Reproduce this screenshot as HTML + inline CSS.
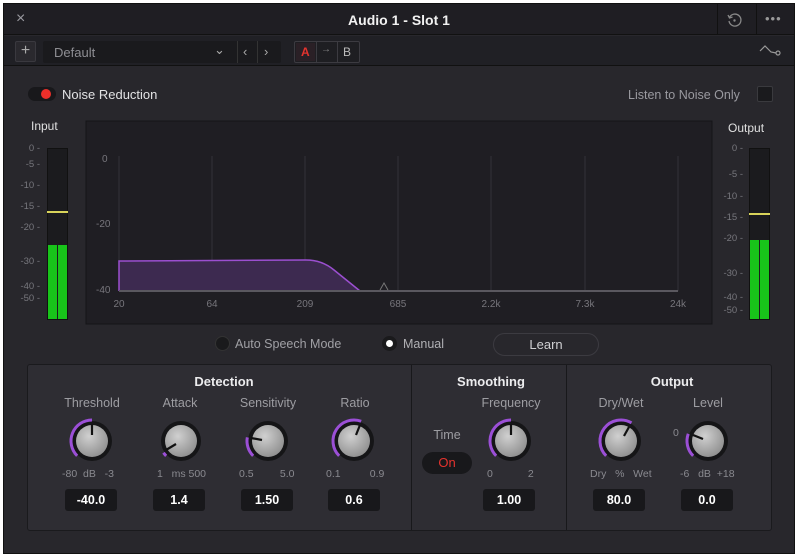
<!DOCTYPE html>
<html><head><meta charset="utf-8"><style>
*{margin:0;padding:0;box-sizing:border-box}
body{width:800px;height:560px;background:#fff;font-family:"Liberation Sans",sans-serif;position:relative;overflow:hidden}
.win{position:absolute;left:3px;top:3px;width:792px;height:551px;background:#28272c;border:1px solid #111}
.abs{position:absolute}
.t{position:absolute;color:#9a9aa0;font-size:12px;white-space:nowrap}
.w{color:#e4e4e6}
.box{position:absolute;background:#18181b;border-radius:3px;color:#fff;font-size:12.5px;font-weight:bold;text-align:center;line-height:22px;height:22px;width:52px}
.lbl{position:absolute;font-size:12.5px;color:#9d9da2;text-align:center;width:100px}
.hd{position:absolute;font-size:13px;font-weight:bold;color:#ececee;text-align:center;width:120px}
.sc{position:absolute;font-size:10.5px;color:#8a8a90;white-space:nowrap}
.ml{position:absolute;font-size:9.5px;color:#77777d;text-align:right;width:30px}
</style></head><body>
<div class="win">
 <!-- title bar -->
 <div class="abs" style="left:0;top:0;width:790px;height:31px;background:#1f1e23;border-bottom:1px solid #111"></div>
 <div class="t" style="left:12px;top:6px;font-size:16px;color:#9a9aa0">×</div>
 <div class="t w" style="left:0;width:790px;text-align:center;top:8px;font-size:14px;font-weight:bold;color:#f2f2f2">Audio 1 - Slot 1</div>
 <div class="abs" style="left:713px;top:0;width:1px;height:31px;background:#111"></div>
 <div class="abs" style="left:752px;top:0;width:1px;height:31px;background:#111"></div>
 <svg class="abs" style="left:722px;top:8px" width="16" height="16" viewBox="0 0 16 16"><path d="M3.5 5.5 A6 6 0 1 1 3 9" fill="none" stroke="#888" stroke-width="1.3"/><path d="M2 3 L3.5 6 L6.5 5" fill="none" stroke="#888" stroke-width="1.3"/><circle cx="8.5" cy="8.5" r="1.2" fill="#888"/></svg>
 <div class="t" style="left:761px;top:7px;font-size:13px;letter-spacing:1px;color:#999">•••</div>
 <!-- toolbar -->
 <div class="abs" style="left:0;top:32px;width:790px;height:30px;background:#202025;border-bottom:1px solid #111"></div>
 <div class="abs" style="left:11px;top:37px;width:21px;height:21px;background:#2a292e;border:1px solid #3a393f;border-radius:2px;color:#aaa;font-size:16px;text-align:center;line-height:18px">+</div>
 <div class="abs" style="left:39px;top:37px;width:238px;height:22px;background:#1a1a1d;border-radius:2px"></div>
 <div class="t" style="left:50px;top:41px;font-size:13px;color:#8e8e93">Default</div>
 <div class="t" style="left:210px;top:38px;font-size:13px;color:#aaa">⌄</div>
 <div class="abs" style="left:233px;top:37px;width:1px;height:22px;background:#333"></div>
 <div class="t" style="left:239px;top:40px;font-size:13px;color:#aaa">‹</div>
 <div class="abs" style="left:253px;top:37px;width:1px;height:22px;background:#333"></div>
 <div class="t" style="left:260px;top:40px;font-size:13px;color:#aaa">›</div>
 <div class="abs" style="left:290px;top:37px;width:66px;height:22px;border:1px solid #3c3b41;border-radius:2px;background:#1e1e22"></div>
 <div class="abs" style="left:292px;top:39px;width:19px;height:18px;background:#2a2026"></div>
 <div class="t" style="left:297px;top:41px;font-size:12px;font-weight:bold;color:#e5332e">A</div>
 <div class="abs" style="left:312px;top:38px;width:1px;height:20px;background:#3c3b41"></div>
 <div class="t" style="left:317px;top:40px;font-size:10px;color:#888">→</div>
 <div class="abs" style="left:333px;top:38px;width:1px;height:20px;background:#3c3b41"></div>
 <div class="t" style="left:339px;top:41px;font-size:12px;color:#bbb">B</div>
 <svg class="abs" style="left:755px;top:40px" width="24" height="14" viewBox="0 0 24 14"><path d="M1 7 L6 2 L12 8 L17 9" fill="none" stroke="#999" stroke-width="1.2"/><circle cx="19" cy="9" r="2" fill="none" stroke="#999" stroke-width="1.2"/></svg>

 <!-- noise reduction toggle -->
 <div class="abs" style="left:24px;top:83px;width:28px;height:14px;background:#18181b;border-radius:7px"></div>
 <div class="abs" style="left:37px;top:85px;width:10px;height:10px;background:#ec2f2a;border-radius:50%"></div>
 <div class="t w" style="left:58px;top:83px;font-size:13px;color:#e2e2e4">Noise Reduction</div>
 <div class="t" style="left:624px;top:84px;font-size:12.5px;color:#9a9aa0">Listen to Noise Only</div>
 <div class="abs" style="left:753px;top:82px;width:16px;height:16px;background:#1a1a1d;border:1px solid #3a3a3e;border-radius:2px"></div>

 <!-- input meter -->
 <div class="t w" style="left:27px;top:115px;font-size:12px;color:#e0e0e0">Input</div>
 <div class="ml" style="left:6px;top:139px">0 -</div>
 <div class="ml" style="left:6px;top:155px">-5 -</div>
 <div class="ml" style="left:6px;top:176px">-10 -</div>
 <div class="ml" style="left:6px;top:197px">-15 -</div>
 <div class="ml" style="left:6px;top:218px">-20 -</div>
 <div class="ml" style="left:6px;top:252px">-30 -</div>
 <div class="ml" style="left:6px;top:277px">-40 -</div>
 <div class="ml" style="left:6px;top:289px">-50 -</div>
 <div class="abs" style="left:43px;top:144px;width:21px;height:172px;background:#1b1b1e;border:1px solid #111"></div>
 <div class="abs" style="left:44px;top:241px;width:9px;height:74px;background:#18c41a"></div>
 <div class="abs" style="left:54px;top:241px;width:9px;height:74px;background:#18c41a"></div>
 <div class="abs" style="left:43px;top:207px;width:21px;height:2px;background:#d8d35a"></div>
 <!-- output meter -->
 <div class="t w" style="left:724px;top:117px;font-size:12px;color:#e0e0e0">Output</div>
 <div class="ml" style="left:709px;top:139px">0 -</div>
 <div class="ml" style="left:709px;top:165px">-5 -</div>
 <div class="ml" style="left:709px;top:187px">-10 -</div>
 <div class="ml" style="left:709px;top:208px">-15 -</div>
 <div class="ml" style="left:709px;top:229px">-20 -</div>
 <div class="ml" style="left:709px;top:264px">-30 -</div>
 <div class="ml" style="left:709px;top:288px">-40 -</div>
 <div class="ml" style="left:709px;top:301px">-50 -</div>
 <div class="abs" style="left:745px;top:144px;width:21px;height:172px;background:#1b1b1e;border:1px solid #111"></div>
 <div class="abs" style="left:746px;top:236px;width:9px;height:79px;background:#18c41a"></div>
 <div class="abs" style="left:756px;top:236px;width:9px;height:79px;background:#18c41a"></div>
 <div class="abs" style="left:745px;top:209px;width:21px;height:2px;background:#d8d35a"></div>

 <!-- graph -->
 <svg class="abs" style="left:81px;top:116px" width="628" height="205" viewBox="81 116 628 205">
  <rect x="82" y="117" width="626" height="203" fill="#1f1e23" stroke="#141417"/>
  <g stroke="#333238" stroke-width="1">
   <line x1="115" y1="152" x2="115" y2="287"/><line x1="208" y1="152" x2="208" y2="287"/><line x1="301" y1="152" x2="301" y2="287"/><line x1="394" y1="152" x2="394" y2="287"/><line x1="487" y1="152" x2="487" y2="287"/><line x1="581" y1="152" x2="581" y2="287"/><line x1="674" y1="152" x2="674" y2="287"/>
  </g>
  <path d="M115 287 L115 257 L302 256 Q318 256 330 266 L356 287 Z" fill="#3d2a50"/>
  <path d="M115 287 L115 257 L302 256 Q318 256 330 266 L356 287" fill="none" stroke="#9b4fd0" stroke-width="1.5"/>
  <line x1="115" y1="287" x2="674" y2="287" stroke="#5a585f" stroke-width="2"/>
  <path d="M376 286 L380 279 L384 286" fill="none" stroke="#777" stroke-width="1"/>
  <g font-size="10" fill="#77767c" font-family="Liberation Sans">
   <text x="98" y="158">0</text><text x="92" y="223">-20</text><text x="92" y="289">-40</text>
   <g text-anchor="middle"><text x="115" y="303">20</text><text x="208" y="303">64</text><text x="301" y="303">209</text><text x="394" y="303">685</text><text x="487" y="303">2.2k</text><text x="581" y="303">7.3k</text><text x="674" y="303">24k</text></g>
  </g>
 </svg>

 <!-- mode row -->
 <div class="abs" style="left:211px;top:332px;width:15px;height:15px;border-radius:50%;background:#1a1a1c;border:1px solid #333"></div>
 <div class="t" style="left:231px;top:333px;font-size:12.5px;color:#a0a0a5">Auto Speech Mode</div>
 <div class="abs" style="left:378px;top:332px;width:15px;height:15px;border-radius:50%;background:#1a1a1c"></div>
 <div class="abs" style="left:382px;top:336px;width:7px;height:7px;border-radius:50%;background:#fff"></div>
 <div class="t" style="left:399px;top:333px;font-size:12.5px;color:#b0b0b4">Manual</div>
 <div class="abs" style="left:489px;top:329px;width:106px;height:23px;border:1px solid #3c3b41;border-radius:12px;color:#d0d0d3;font-size:13px;text-align:center;line-height:21px">Learn</div>

 <!-- bottom panel -->
 <div class="abs" style="left:23px;top:360px;width:745px;height:167px;background:#2e2d33;border:1px solid #1a1a1d;border-radius:3px"></div>
 <div class="abs" style="left:407px;top:361px;width:1px;height:165px;background:#18181b"></div>
 <div class="abs" style="left:562px;top:361px;width:1px;height:165px;background:#18181b"></div>
 <div class="hd" style="left:160px;top:370px">Detection</div>
 <div class="hd" style="left:427px;top:370px">Smoothing</div>
 <div class="hd" style="left:608px;top:370px">Output</div>
 <div class="lbl" style="left:38px;top:392px">Threshold</div>
 <div class="lbl" style="left:126px;top:392px">Attack</div>
 <div class="lbl" style="left:214px;top:392px">Sensitivity</div>
 <div class="lbl" style="left:301px;top:392px">Ratio</div>
 <div class="lbl" style="left:457px;top:392px">Frequency</div>
 <div class="lbl" style="left:567px;top:392px">Dry/Wet</div>
 <div class="lbl" style="left:654px;top:392px">Level</div>
 <div class="lbl" style="left:393px;top:424px">Time</div>
 <div class="abs" style="left:418px;top:448px;width:50px;height:22px;background:#18181b;border-radius:11px;color:#e5332e;font-size:13px;text-align:center;line-height:22px">On</div>

 <svg class="abs" style="left:0;top:0" width="790" height="550">
  <defs><radialGradient id="g" cx="40%" cy="35%" r="70%"><stop offset="0" stop-color="#d0d0d0"/><stop offset="1" stop-color="#8e8e8e"/></radialGradient></defs>
  <g id="k1" transform="translate(88,437)">
   <circle r="20" fill="#151517"/><circle r="16" fill="url(#g)"/>
   <path d="M-14.85 14.85 A21 21 0 0 1 0 -21" fill="none" stroke="#9b4fd6" stroke-width="3"/>
   <line x1="0" y1="-6" x2="0" y2="-17" stroke="#111" stroke-width="2.2"/>
  </g>
  <g transform="translate(177,437)">
   <circle r="20" fill="#151517"/><circle r="16" fill="url(#g)"/>
   <path d="M-14.85 14.85 A21 21 0 0 1 -17.5 11.8" fill="none" stroke="#9b4fd6" stroke-width="3"/>
   <line x1="-5" y1="3" x2="-15" y2="9" stroke="#111" stroke-width="2.2"/>
  </g>
  <g transform="translate(264,437)">
   <circle r="20" fill="#151517"/><circle r="16" fill="url(#g)"/>
   <path d="M-14.85 14.85 A21 21 0 0 1 -20.68 -3.65" fill="none" stroke="#9b4fd6" stroke-width="3"/>
   <line x1="-6" y1="-1" x2="-17" y2="-3" stroke="#111" stroke-width="2.2"/>
  </g>
  <g transform="translate(350,437)">
   <circle r="20" fill="#151517"/><circle r="16" fill="url(#g)"/>
   <path d="M-14.85 14.85 A21 21 0 0 1 7.18 -19.73" fill="none" stroke="#9b4fd6" stroke-width="3"/>
   <line x1="2" y1="-6" x2="6" y2="-16" stroke="#111" stroke-width="2.2"/>
  </g>
  <g transform="translate(507,437)">
   <circle r="20" fill="#151517"/><circle r="16" fill="url(#g)"/>
   <path d="M-14.85 14.85 A21 21 0 0 1 0 -21" fill="none" stroke="#9b4fd6" stroke-width="3"/>
   <line x1="0" y1="-6" x2="0" y2="-17" stroke="#111" stroke-width="2.2"/>
  </g>
  <g transform="translate(617,437)">
   <circle r="20" fill="#151517"/><circle r="16" fill="url(#g)"/>
   <path d="M-14.85 14.85 A21 21 0 0 1 10.5 -18.19" fill="none" stroke="#9b4fd6" stroke-width="3"/>
   <line x1="3" y1="-5" x2="8" y2="-14" stroke="#111" stroke-width="2.2"/>
  </g>
  <g transform="translate(704,437)">
   <circle r="20" fill="#151517"/><circle r="16" fill="url(#g)"/>
   <path d="M-14.85 14.85 A21 21 0 0 1 -19.73 -7.18" fill="none" stroke="#9b4fd6" stroke-width="3"/>
   <line x1="-5" y1="-2" x2="-15" y2="-6" stroke="#111" stroke-width="2.2"/>
  </g>
 </svg>

 <div class="sc" style="left:58px;top:464px">-80&nbsp; dB&nbsp;&nbsp; -3</div>
 <div class="sc" style="left:153px;top:464px">1&nbsp;&nbsp; ms 500</div>
 <div class="sc" style="left:235px;top:464px">0.5&nbsp;&nbsp;&nbsp;&nbsp;&nbsp;&nbsp;&nbsp;&nbsp; 5.0</div>
 <div class="sc" style="left:322px;top:464px">0.1&nbsp;&nbsp;&nbsp;&nbsp;&nbsp;&nbsp;&nbsp;&nbsp;&nbsp; 0.9</div>
 <div class="sc" style="left:483px;top:464px">0&nbsp;&nbsp;&nbsp;&nbsp;&nbsp;&nbsp;&nbsp;&nbsp;&nbsp;&nbsp;&nbsp; 2</div>
 <div class="sc" style="left:586px;top:464px">Dry&nbsp;&nbsp; %&nbsp;&nbsp; Wet</div>
 <div class="sc" style="left:676px;top:464px">-6&nbsp;&nbsp; dB&nbsp; +18</div>
 <div class="sc" style="left:669px;top:423px">0</div>

 <div class="box" style="left:61px;top:485px">-40.0</div>
 <div class="box" style="left:149px;top:485px">1.4</div>
 <div class="box" style="left:237px;top:485px">1.50</div>
 <div class="box" style="left:324px;top:485px">0.6</div>
 <div class="box" style="left:479px;top:485px">1.00</div>
 <div class="box" style="left:589px;top:485px">80.0</div>
 <div class="box" style="left:677px;top:485px">0.0</div>
</div>
</body></html>
